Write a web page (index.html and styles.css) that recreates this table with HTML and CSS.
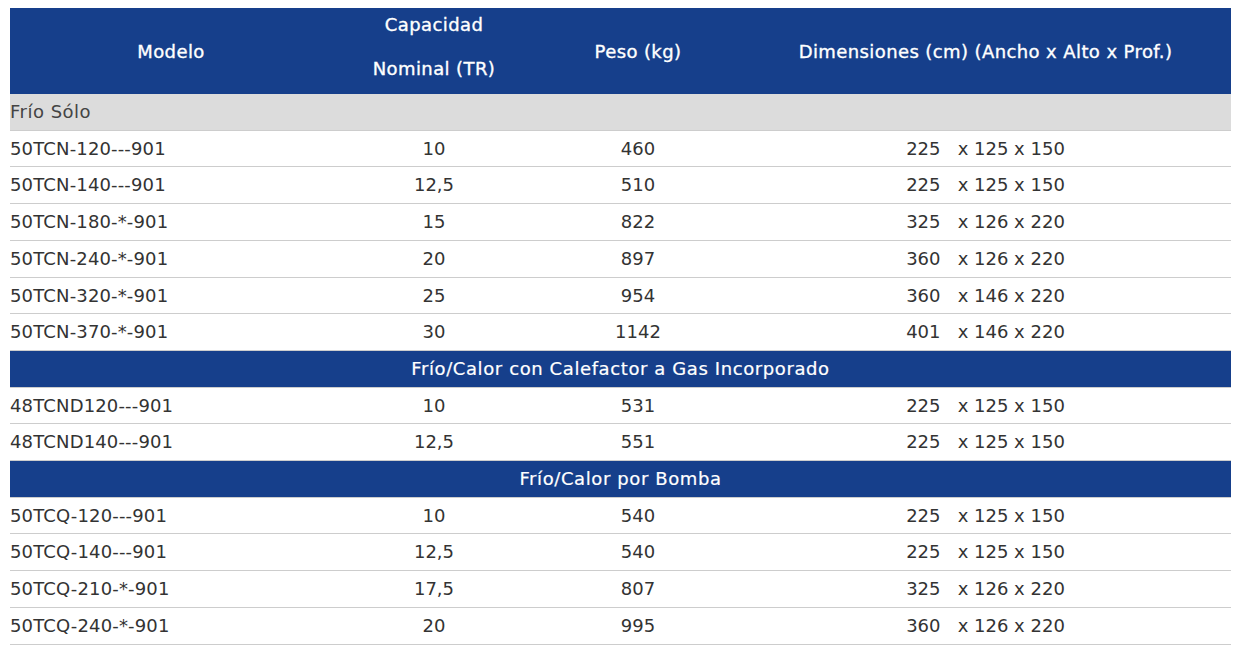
FILE: index.html
```html
<!DOCTYPE html>
<html lang="es">
<head>
<meta charset="utf-8">
<title>Modelos</title>
<link rel="stylesheet" href="styles.css">
</head>
<body>
<div class="page">
<table class="spec">
  <colgroup>
    <col class="c-model">
    <col class="c-cap">
    <col class="c-peso">
    <col class="c-dim">
  </colgroup>
  <thead>
    <tr>
      <th class="h-mid">Modelo</th>
      <th class="h-cap"><div class="cap-lines"><span>Capacidad</span><span>Nominal (TR)</span></div></th>
      <th class="h-mid">Peso (kg)</th>
      <th class="h-mid">Dimensiones (cm) (Ancho x Alto x Prof.)</th>
    </tr>
  </thead>
  <tbody>
    <tr class="group"><td colspan="4">Frío Sólo</td></tr>
    <tr><td class="model">50TCN-120---901</td><td>10</td><td>460</td><td>225&nbsp;&nbsp; x 125 x 150</td></tr>
    <tr><td class="model">50TCN-140---901</td><td>12,5</td><td>510</td><td>225&nbsp;&nbsp; x 125 x 150</td></tr>
    <tr><td class="model">50TCN-180-*-901</td><td>15</td><td>822</td><td>325&nbsp;&nbsp; x 126 x 220</td></tr>
    <tr><td class="model">50TCN-240-*-901</td><td>20</td><td>897</td><td>360&nbsp;&nbsp; x 126 x 220</td></tr>
    <tr><td class="model">50TCN-320-*-901</td><td>25</td><td>954</td><td>360&nbsp;&nbsp; x 146 x 220</td></tr>
    <tr><td class="model">50TCN-370-*-901</td><td>30</td><td>1142</td><td>401&nbsp;&nbsp; x 146 x 220</td></tr>
    <tr class="section"><td colspan="4">Frío/Calor con Calefactor a Gas Incorporado</td></tr>
    <tr><td class="model">48TCND120---901</td><td>10</td><td>531</td><td>225&nbsp;&nbsp; x 125 x 150</td></tr>
    <tr><td class="model">48TCND140---901</td><td>12,5</td><td>551</td><td>225&nbsp;&nbsp; x 125 x 150</td></tr>
    <tr class="section"><td colspan="4">Frío/Calor por Bomba</td></tr>
    <tr><td class="model">50TCQ-120---901</td><td>10</td><td>540</td><td>225&nbsp;&nbsp; x 125 x 150</td></tr>
    <tr><td class="model">50TCQ-140---901</td><td>12,5</td><td>540</td><td>225&nbsp;&nbsp; x 125 x 150</td></tr>
    <tr><td class="model">50TCQ-210-*-901</td><td>17,5</td><td>807</td><td>325&nbsp;&nbsp; x 126 x 220</td></tr>
    <tr><td class="model">50TCQ-240-*-901</td><td>20</td><td>995</td><td>360&nbsp;&nbsp; x 126 x 220</td></tr>
  </tbody>
</table>
</div>
</body>
</html>
```
FILE: styles.css
```css
html, body {
  margin: 0;
  padding: 0;
  background: #ffffff;
}

.page {
  padding: 8px 9px 0 10px;
  font-family: "DejaVu Sans", Verdana, sans-serif;
  font-size: 18px;
  color: #333333;
}

.spec {
  width: 1221px;
  table-layout: fixed;
  border-collapse: separate;
  border-spacing: 0;
}

.c-model { width: 322px; }
.c-cap { width: 204px; }
.c-peso { width: 204px; }
.c-dim { width: 491px; }

.spec thead th {
  background: #163f8b;
  color: #ffffff;
  font-weight: normal;
  letter-spacing: 0.4px;
  -webkit-text-stroke: 0.35px #ffffff;
  height: 86px;
  padding: 0;
  text-align: center;
  box-sizing: border-box;
}

.h-mid {
  vertical-align: middle;
}

.h-cap {
  vertical-align: top;
}

.cap-lines {
  display: flex;
  flex-direction: column;
  align-items: center;
  gap: 12px;
  padding-top: 0.5px;
  line-height: 32px;
}

.spec tbody td {
  padding: 0;
  line-height: 35.71px;
  border-bottom: 1px solid #cdcdcd;
  text-align: center;
  white-space: nowrap;
}

.spec tbody td.model {
  text-align: left;
  padding-left: 0;
  letter-spacing: 0.15px;
}

.spec tbody tr.group td {
  background: #dcdcdc;
  color: #444444;
  text-align: left;
  letter-spacing: 0.5px;
}

.spec tbody tr.section td {
  background: #163f8b;
  color: #ffffff;
  text-align: center;
  letter-spacing: 0.6px;
  -webkit-text-stroke: 0.2px #ffffff;
}
```
